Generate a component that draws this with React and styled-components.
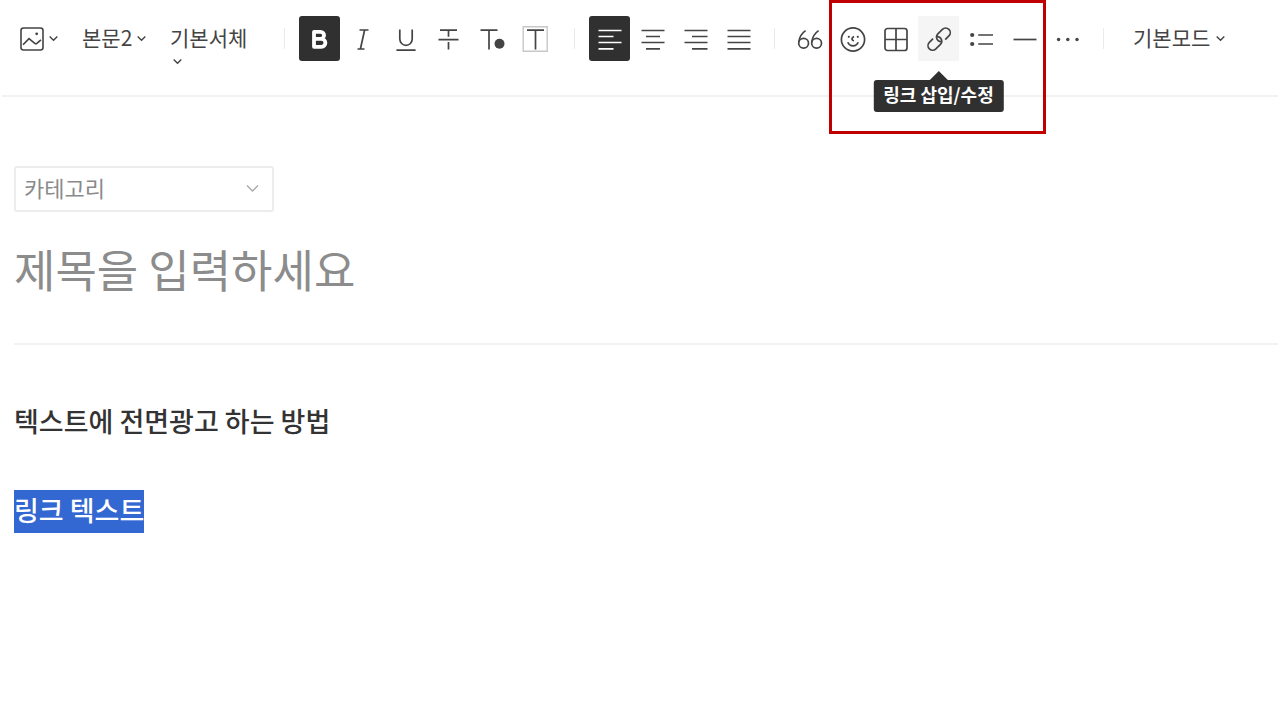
import React, { useState } from 'react';
import styled, { createGlobalStyle, css } from 'styled-components';

const GlobalStyle = createGlobalStyle`
    * {
        box-sizing: border-box;
    }
    body {
        margin: 0;
        background: #fff;
        color: #333;
        font-family: "Noto Sans CJK KR", sans-serif;
    }
    button, select, input {
        font-family: inherit;
    }
`

const Toolbar = styled.header`
    display: flex;
    align-items: flex-start;
    height: 97px;
    margin: 0 2px;
    padding: 16px 0 0 18px;
    border-bottom: 2px solid #f2f2f2;
`

const Menus = styled.div`
    display: flex;
    align-items: flex-start;
    gap: 24px;
    margin-right: 34px;
`

const Tools = styled.div`
    display: flex;
    gap: 2px;
`

const Marked = styled.div`
    position: relative;
    display: flex;
    gap: 2px;

    &::after {
        content: '';
        position: absolute;
        inset: -16px -1px -73px -3px;
        border: 3px solid #c00000;
        pointer-events: none;
    }
`

const Divider = styled.span`
    flex: none;
    width: 1px;
    height: 21px;
    margin: 12px ${({ $after }) => $after || 14}px 0 ${({ $before }) => $before || 0}px;
    background: #ebebeb;
`

const ImageButton = styled.button`
    display: flex;
    align-items: center;
    gap: 5px;
    height: 45px;
    padding: 0;
    border: 0;
    background: none;
    color: #444;
`

const ToolButton = styled.button`
    display: flex;
    align-items: center;
    justify-content: center;
    width: 41px;
    height: 45px;
    padding: 0;
    border: 0;
    border-radius: 3px;
    background: none;
    color: #444;

    ${({ $active }) => $active && css`
        background: #303030;
        color: #fff;
    `}
    ${({ $hover }) => $hover && css`
        background: #f5f5f5;
        border-radius: 0;
    `}
`

const MenuLabel = styled.label`
    display: flex;
    flex-direction: ${({ $wrap }) => $wrap ? 'column' : 'row'};
    align-items: ${({ $wrap }) => $wrap ? 'flex-start' : 'center'};
    gap: ${({ $wrap }) => $wrap ? '0' : '4px'};
    color: #444;

    svg {
        margin-left: ${({ $wrap }) => $wrap ? '3px' : '0'};
    }
`

const MenuSelect = styled.select`
    appearance: none;
    width: ${({ $width }) => $width}px;
    height: ${({ $height }) => $height || 45}px;
    padding: 0 0 ${({ $wrap }) => $wrap ? 0 : 4}px;
    border: 0;
    background: none;
    color: inherit;
    font-size: 21px;
    line-height: 30px;
`

const TooltipAnchor = styled.div`
    position: relative;
`

const Tooltip = styled.span`
    position: absolute;
    top: 64px;
    left: 50%;
    padding: 0 10px 4px;
    border-radius: 3px;
    background: #303030;
    color: #fff;
    font-size: 18px;
    font-weight: 700;
    line-height: 28px;
    white-space: nowrap;
    transform: translateX(-50%);

    &::before {
        content: '';
        position: absolute;
        bottom: 100%;
        left: 50%;
        border: 9px solid transparent;
        border-top: 0;
        border-bottom-color: #303030;
        transform: translateX(-50%);
    }
`

const Editor = styled.main`
    padding: 69px 2px 0 14px;
`

const Category = styled.label`
    position: relative;
    display: block;
    width: 260px;
    color: #aaa;

    svg {
        position: absolute;
        top: 16px;
        right: 15px;
        pointer-events: none;
    }
`

const CategorySelect = styled.select`
    appearance: none;
    display: block;
    width: 100%;
    height: 46px;
    padding: 0 8px 4px;
    border: 2px solid #ececec;
    border-radius: 3px;
    background: #fff;
    color: #8a8a8a;
    font-size: 22px;
    line-height: 30px;
`

const TitleInput = styled.input`
    display: block;
    width: 100%;
    height: 133px;
    padding: 0 0 18px;
    border: 0;
    border-bottom: 2px solid #f2f2f2;
    outline: 0;
    background: none;
    color: #333;
    font-size: 45px;

    &::placeholder {
        color: #8c8c8c;
        opacity: 1;
    }
`

const Content = styled.div`
    padding-top: 56px;
    color: #333;
    font-size: 27px;
    font-weight: 500;
    line-height: 39px;
`

const Paragraph = styled.p`
    margin: 0 0 50px;
`

const Selected = styled.mark`
    display: inline-block;
    padding-bottom: 4px;
    background: #3367d1;
    color: #fff;
`

const Icon = ({ width = 26, children }) => (
    <svg width={width} height="26" viewBox={`0 0 ${width} 26`} fill="none" stroke="currentColor" strokeWidth="1.7" aria-hidden="true">
        {children}
    </svg>
)

const Chevron = ({ width = 9 }) => (
    <svg width={width} height={width} viewBox="0 0 9 9" fill="none" stroke="currentColor" strokeWidth={width > 9 ? 1 : 1.4} aria-hidden="true">
        <path d="M.7 2.5 4.5 6.3 8.3 2.5" />
    </svg>
)

const formats = [
    { name: '굵게', icon: <path strokeWidth="3.8" strokeLinejoin="round" d="M7 5.9h6.6a3.4 3.4 0 0 1 0 6.9H7zM7 12.8h7.4a3.9 3.9 0 0 1 0 8H7z" /> },
    { name: '기울임', icon: <path d="M9.5 4h9M7.5 23h7M14.6 4 10.4 23" /> },
    { name: '밑줄', icon: <path d="M6.8 3.5v9.6a6.2 6.2 0 0 0 12.4 0V3.5M3.4 24.2h19.2" /> },
    { name: '취소선', icon: <path d="M4 4.2h17M12.5 4.2v6.6M12.5 16v7.5M2.5 13.6h20" /> },
    { name: '글자색', icon: <><path d="M1.5 4.2h17M10 4.2v19.3" /><circle cx="20.5" cy="17.8" r="5" fill="currentColor" stroke="none" /></> },
    { name: '글자 배경색', icon: <><path stroke="#c8c8c8" strokeWidth="1.4" d="M1.2.8h24v24.4h-24z" /><path d="M5 4.2h17M13.5 4.2v19.3" /></> },
]

const aligns = [
    { name: '왼쪽 정렬', icon: 'M1.5 4.5h23M1.5 10.5h15M1.5 16.5h23M1.5 22.8h15' },
    { name: '가운데 정렬', icon: 'M1.5 4.5h23M6 10.5h14M1.5 16.5h23M6 22.8h14' },
    { name: '오른쪽 정렬', icon: 'M1.5 4.5h23M9 10.5h15.5M1.5 16.5h23M9 22.8h15.5' },
    { name: '양쪽 정렬', icon: 'M1.5 4.5h23M1.5 10.5h23M1.5 16.5h23M1.5 22.8h23' },
]

function App() {
    const [bold, setBold] = useState(true);
    const [align, setAlign] = useState(0);
    const [title, setTitle] = useState('');

    return (
        <>
            <GlobalStyle />
            <Toolbar>
                <Menus>
                    <ImageButton aria-label="이미지">
                        <svg width="24" height="24" viewBox="0 0 24 24" fill="none" stroke="currentColor" strokeWidth="1.6" aria-hidden="true">
                            <rect x="1" y="1" width="22" height="22" rx="2.5" />
                            <path d="M3 17.8 9 11.6 14.8 16.3q1.2 1 2.3-.1L21 12.8" />
                            <circle cx="16.7" cy="6.8" r="1.4" fill="currentColor" stroke="none" />
                        </svg>
                        <Chevron />
                    </ImageButton>
                    <MenuLabel>
                        <MenuSelect $width={51} aria-label="문단 모양">
                            <option>본문2</option>
                        </MenuSelect>
                        <Chevron />
                    </MenuLabel>
                    <MenuLabel $wrap>
                        <MenuSelect $wrap $width={80} $height={41} aria-label="글꼴">
                            <option>기본서체</option>
                        </MenuSelect>
                        <Chevron />
                    </MenuLabel>
                </Menus>
                <Divider />
                <Tools>
                    {formats.map((format, i) => (
                        <ToolButton key={format.name} aria-label={format.name} $active={i === 0 && bold} onClick={() => i === 0 && setBold(!bold)}>
                            <Icon>{format.icon}</Icon>
                        </ToolButton>
                    ))}
                </Tools>
                <Divider $before={19} />
                <Tools>
                    {aligns.map((item, i) => (
                        <ToolButton key={item.name} aria-label={item.name} $active={i === align} onClick={() => setAlign(i)}>
                            <Icon><path d={item.icon} /></Icon>
                        </ToolButton>
                    ))}
                </Tools>
                <Divider $before={15} />
                <Tools>
                    <ToolButton aria-label="인용구">
                        <Icon>
                            <circle cx="6.6" cy="17.3" r="4.9" />
                            <path d="M1.8 16C2.4 10.5 5 7 8.6 4.6" />
                            <circle cx="19.6" cy="17.3" r="4.9" />
                            <path d="M14.8 16C15.4 10.5 18 7 21.6 4.6" />
                        </Icon>
                    </ToolButton>
                    <Marked>
                        <ToolButton aria-label="이모티콘">
                            <Icon>
                                <circle cx="13" cy="13.5" r="11.6" />
                                <path d="M7.8 16.2q1.4 3.6 5.2 3.6t5.2-3.6M14 10.4q-2.6 1.4-1.8 3.4.4 1 1.8.9" />
                                <circle cx="8.8" cy="10.8" r="1.1" fill="currentColor" stroke="none" />
                                <circle cx="17.8" cy="10.8" r="1.1" fill="currentColor" stroke="none" />
                            </Icon>
                        </ToolButton>
                        <ToolButton aria-label="표">
                            <Icon>
                                <rect x="2" y="2.5" width="22" height="22" rx="2.5" />
                                <path d="M13 2.5v22M2 13.5h22" />
                            </Icon>
                        </ToolButton>
                        <TooltipAnchor>
                            <ToolButton aria-label="링크" aria-describedby="link-tip" $hover>
                                <Icon>
                                    <g transform="rotate(-45 13 13)">
                                        <path d="M17 17.8H22.2A4.6 4.6 0 0 0 22.2 8.6H15.8A4.6 4.6 0 0 0 13 16.8" />
                                        <path d="M9 8.6H3.8A4.6 4.6 0 0 0 3.8 17.8H10.2A4.6 4.6 0 0 0 13 9.6" />
                                    </g>
                                </Icon>
                            </ToolButton>
                            <Tooltip role="tooltip" id="link-tip">링크 삽입/수정</Tooltip>
                        </TooltipAnchor>
                        <ToolButton aria-label="목록">
                            <Icon>
                                <path d="M9.2 9H24M9.2 18H24" />
                                <circle cx="3.2" cy="9" r="2.1" fill="currentColor" stroke="none" />
                                <circle cx="3.2" cy="18" r="2.1" fill="currentColor" stroke="none" />
                            </Icon>
                        </ToolButton>
                        <ToolButton aria-label="구분선">
                            <Icon><path d="M1.5 13.5h23" /></Icon>
                        </ToolButton>
                    </Marked>
                    <ToolButton aria-label="더보기">
                        <Icon>
                            <g fill="currentColor" stroke="none">
                                <circle cx="3.6" cy="13.5" r="1.7" />
                                <circle cx="12.8" cy="13.5" r="1.7" />
                                <circle cx="22" cy="13.5" r="1.7" />
                            </g>
                        </Icon>
                    </ToolButton>
                </Tools>
                <Divider $before={15} $after={29} />
                <MenuLabel>
                    <MenuSelect $width={79} aria-label="편집 모드">
                        <option>기본모드</option>
                    </MenuSelect>
                    <Chevron />
                </MenuLabel>
            </Toolbar>
            <Editor>
                <Category>
                    <CategorySelect aria-label="카테고리">
                        <option>카테고리</option>
                    </CategorySelect>
                    <Chevron width={13} />
                </Category>
                <TitleInput aria-label="제목" placeholder="제목을 입력하세요" value={title} onChange={(e) => setTitle(e.target.value)} />
                <Content>
                    <Paragraph>텍스트에 전면광고 하는 방법</Paragraph>
                    <Paragraph><Selected>링크 텍스트</Selected></Paragraph>
                </Content>
            </Editor>
        </>
    )
}

export default App
